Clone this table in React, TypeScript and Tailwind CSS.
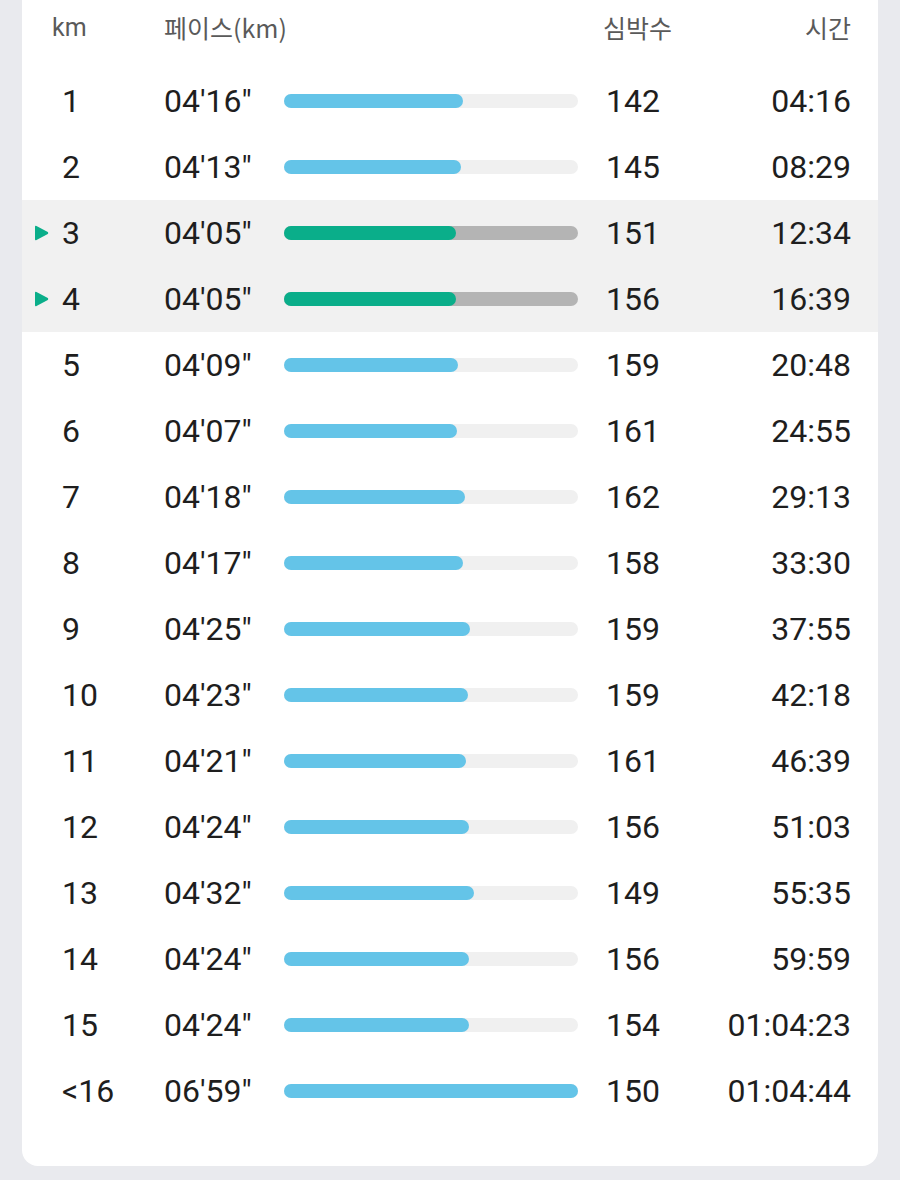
import React from "react";

type Row = { km: string; pace: string; fill: number; hr: string; time: string; hi?: boolean };

const rows: Row[] = [
  { km: "1", pace: "04'16\"", fill: 179, hr: "142", time: "04:16" },
  { km: "2", pace: "04'13\"", fill: 177, hr: "145", time: "08:29" },
  { km: "3", pace: "04'05\"", fill: 172, hr: "151", time: "12:34", hi: true },
  { km: "4", pace: "04'05\"", fill: 172, hr: "156", time: "16:39", hi: true },
  { km: "5", pace: "04'09\"", fill: 174, hr: "159", time: "20:48" },
  { km: "6", pace: "04'07\"", fill: 173, hr: "161", time: "24:55" },
  { km: "7", pace: "04'18\"", fill: 181, hr: "162", time: "29:13" },
  { km: "8", pace: "04'17\"", fill: 179, hr: "158", time: "33:30" },
  { km: "9", pace: "04'25\"", fill: 186, hr: "159", time: "37:55" },
  { km: "10", pace: "04'23\"", fill: 184, hr: "159", time: "42:18" },
  { km: "11", pace: "04'21\"", fill: 182, hr: "161", time: "46:39" },
  { km: "12", pace: "04'24\"", fill: 185, hr: "156", time: "51:03" },
  { km: "13", pace: "04'32\"", fill: 190, hr: "149", time: "55:35" },
  { km: "14", pace: "04'24\"", fill: 185, hr: "156", time: "59:59" },
  { km: "15", pace: "04'24\"", fill: 185, hr: "154", time: "01:04:23" },
  { km: "<16", pace: "06'59\"", fill: 294, hr: "150", time: "01:04:44" },
];

const num = { fontFamily: "Roboto, 'Noto Sans', sans-serif" };
const kr = { fontFamily: "'Noto Sans CJK KR', 'Noto Sans', sans-serif" };

export default function App() {
  return (
    <div className="w-[900px] h-[1180px] bg-[#e9eaee] px-[22px]">
      <div className="bg-white rounded-b-[16px] pb-[42px]">
        <div className="flex items-center h-[56px] text-[25px] text-[#5a5a5a]" style={kr}>
          <div className="w-[142px] pl-[30px]" style={num}>km</div>
          <div className="w-[439px]">페이스(km)</div>
          <div className="flex-1">심박수</div>
          <div className="pr-[27px]">시간</div>
        </div>
        <div className="h-[12px]" />
        {rows.map((r) => (
          <div
            key={r.km}
            className={`flex items-center h-[66px] pl-[12px] pr-[27px] text-[32px] text-[#1e1e1e] ${r.hi ? "bg-[#f1f1f1]" : ""}`}
            style={num}
          >
            <div className="w-[28px] flex items-center">
              {r.hi && (
                <svg width="15" height="16" viewBox="0 0 15 16">
                  <path d="M1 1.8 Q1 0.2 2.5 1 L13.8 7 Q14.8 8 13.8 9 L2.5 15 Q1 15.8 1 14.2 Z" fill="#0aae8a" />
                </svg>
              )}
            </div>
            <div className="w-[102px]">{r.km}</div>
            <div className="w-[120px]">{r.pace}</div>
            <div className={`w-[294px] h-[14px] rounded-full ${r.hi ? "bg-[#b4b4b4]" : "bg-[#f0f0f0]"}`}>
              <div
                className={`h-full rounded-full ${r.hi ? "bg-[#0aae8a]" : "bg-[#64c4e8]"}`}
                style={{ width: r.fill }}
              />
            </div>
            <div className="flex-1 pl-[28px]">{r.hr}</div>
            <div className="text-right">{r.time}</div>
          </div>
        ))}
      </div>
    </div>
  );
}
